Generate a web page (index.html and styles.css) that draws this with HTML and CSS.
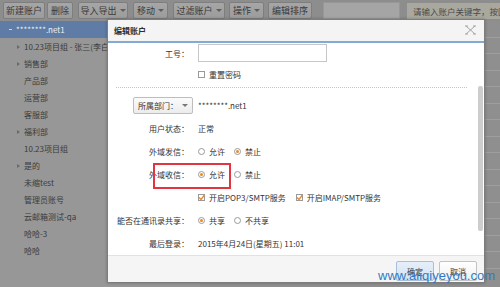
FILE: index.html
```html
<!DOCTYPE html>
<html lang="zh-CN">
<head>
<meta charset="utf-8">
<link rel="stylesheet" href="styles.css">
</head>
<body>
<div class="page">
  <div class="toolbar">
    <span class="tbtn w42">新建账户</span>
    <span class="tbtn w26 ml2">删除</span>
    <span class="tbtn w50">导入导出 <i class="caret"></i></span>
    <span class="tbtn w35">移动 <i class="caret"></i></span>
    <span class="tbtn w52">过滤账户 <i class="caret"></i></span>
    <span class="tbtn w35 ml4">操作 <i class="caret"></i></span>
    <span class="tbtn w44 ml4">编辑排序</span>
    <span class="search"></span>
    <span class="hint">请输入账户关键字，按回车</span>
  </div>
  <div class="content">
    <div class="sidebar">
      <div class="node selected"><i class="dash"></i>********.net1</div>
      <div class="node"><i class="arrow"></i>10.23项目组 - 张三(李白)</div>
      <div class="node"><i class="arrow"></i>销售部</div>
      <div class="node"><i class="noarrow"></i>产品部</div>
      <div class="node"><i class="noarrow"></i>运营部</div>
      <div class="node"><i class="noarrow"></i>客服部</div>
      <div class="node"><i class="arrow"></i>福利部</div>
      <div class="node"><i class="noarrow"></i>10.23项目组</div>
      <div class="node"><i class="arrow"></i>是的</div>
      <div class="node"><i class="noarrow"></i>未缩test</div>
      <div class="node"><i class="noarrow"></i>管理员账号</div>
      <div class="node"><i class="noarrow"></i>云邮箱测试-qa</div>
      <div class="node"><i class="noarrow"></i>哈哈-3</div>
      <div class="node"><i class="noarrow"></i>哈哈</div>
    </div>
    <div class="main">
      <div class="trow"></div><div class="trow"></div><div class="trow"></div><div class="trow"></div>
      <div class="trow"></div><div class="trow"></div><div class="trow"></div><div class="trow"></div>
      <div class="trow"></div><div class="trow"></div><div class="trow"></div><div class="trow"></div>
      <div class="trow"></div><div class="trow"></div><div class="trow"></div>
      <div class="trow last"><span class="cb"></span><span class="mlink">********</span><span class="mtext">********.net1 ****</span></div>
    </div>
  </div>
</div>

<div class="dialog">
  <div class="dhead">
    <span class="dtitle">编辑账户</span>
    <svg class="close" width="11" height="10" viewBox="0 0 11 10"><path d="M1 1 L10 9 M10 1 L1 9 M0 1 H3 M8 1 H11 M0 9 H3 M8 9 H11" stroke="#a4a4a4" stroke-width="1" fill="none"/></svg>
  </div>
  <div class="dbody">
    <div class="frow r18">
      <label class="lbl">工号：</label>
      <span class="input"></span>
    </div>
    <div class="frow r24">
      <span class="lbl"></span>
      <span class="opt"><i class="chk"></i>重置密码</span>
    </div>
    <div class="sep"></div>
    <div class="frow r19">
      <span class="lbl"><span class="deptbtn">所属部门：<i class="caret dark"></i></span></span>
      <span>********.net1</span>
    </div>
    <div class="frow r23 mt2">
      <span class="lbl">用户状态：</span>
      <span>正常</span>
    </div>
    <div class="frow r23">
      <span class="lbl">外域发信：</span>
      <span class="opt"><i class="radio"></i>允许</span>
      <span class="opt"><i class="radio on"></i>禁止</span>
    </div>
    <div class="frow r23 marked">
      <span class="lbl">外域收信：</span>
      <span class="opt"><i class="radio on"></i>允许</span>
      <span class="opt"><i class="radio"></i>禁止</span>
      <span class="redbox"></span>
    </div>
    <div class="frow r23">
      <span class="lbl"></span>
      <span class="opt wide"><i class="chk on"><svg width="7" height="7" viewBox="0 0 7 7"><path d="M1 3.5 L3 5.5 L6.5 1" stroke="#e5882f" stroke-width="1.4" fill="none"/></svg></i>开启POP3/SMTP服务</span>
      <span class="opt"><i class="chk on"><svg width="7" height="7" viewBox="0 0 7 7"><path d="M1 3.5 L3 5.5 L6.5 1" stroke="#e5882f" stroke-width="1.4" fill="none"/></svg></i>开启IMAP/SMTP服务</span>
    </div>
    <div class="frow r23">
      <span class="lbl">能否在通讯录共享：</span>
      <span class="opt"><i class="radio on"></i>共享</span>
      <span class="opt"><i class="radio"></i>不共享</span>
    </div>
    <div class="frow r23">
      <span class="lbl">最后登录：</span>
      <span>2015年4月24日(星期五) 11:01</span>
    </div>
    <div class="thumb"></div>
  </div>
  <div class="dfoot">
    <span class="btn primary">确定</span>
    <span class="btn">取消</span>
  </div>
</div>

<div class="watermark">www.aliqiyeyou.com</div>
</body>
</html>
```

FILE: styles.css
```css
* { box-sizing: border-box; }
html, body { margin: 0; padding: 0; }
body {
  width: 500px;
  height: 287px;
  overflow: hidden;
  position: relative;
  background: #8e8e8e;
  font-family: "Noto Sans CJK SC", "Liberation Sans", sans-serif;
  font-size: 8px;
  color: #333;
}
.page { display: flex; flex-direction: column; height: 287px; }

.toolbar {
  height: 21px;
  display: flex;
  align-items: center;
  gap: 5px;
  padding: 0 0 0 3px;
  background: #8d8d8d;
  flex: none;
}
.tbtn {
  height: 17px;
  display: flex;
  align-items: center;
  justify-content: center;
  gap: 3px;
  background: linear-gradient(#a6a6a6, #9c9c9c);
  border: 1px solid #7e7e7e;
  border-radius: 2px;
  font-size: 9px;
  color: #3a3a3a;
  white-space: nowrap;
  flex: none;
}
.w42 { width: 42px; }
.w26 { width: 26px; }
.w50 { width: 50px; }
.w35 { width: 35px; }
.w52 { width: 52px; }
.w44 { width: 44px; }
.ml2 { margin-left: -3px; }
.ml4 { margin-left: -1px; }
.caret {
  display: inline-block;
  width: 0; height: 0;
  border-left: 3px solid transparent;
  border-right: 3px solid transparent;
  border-top: 3px solid #5e5e5e;
}
.caret.dark { border-top-color: #777; margin-left: 4px; }
.search {
  width: 77px;
  height: 17px;
  margin-left: 6px;
  background: #a5a5a5;
  border: 1px solid #979797;
  flex: none;
}
.hint {
  position: relative;
  margin-left: 2px;
  height: 16px;
  flex: 1;
  display: flex;
  align-items: center;
  padding-left: 6px;
  background: #a9a89f;
  color: #4a4a4a;
  font-size: 8.5px;
  white-space: nowrap;
  overflow: hidden;
}
.hint::before {
  content: "";
  position: absolute;
  left: -4px;
  top: 4px;
  border-top: 4px solid transparent;
  border-bottom: 4px solid transparent;
  border-right: 4px solid #a9a89f;
}

.content { flex: 1; display: flex; min-height: 0; }
.sidebar {
  width: 200px;
  flex: none;
  background: #979797;
  padding-top: 0;
}
.node {
  height: 17px;
  display: flex;
  align-items: center;
  padding-left: 17px;
  color: #3b3b3b;
  white-space: nowrap;
}
.node .arrow {
  width: 0; height: 0;
  border-top: 2.5px solid transparent;
  border-bottom: 2.5px solid transparent;
  border-left: 3px solid #6a6a6a;
  margin-right: 4px;
}
.node .noarrow { width: 3px; margin-right: 4px; }
.node.selected {
  background: #5f7ca6;
  color: #f0f0f0;
  padding-left: 9px;
}
.node .dash {
  width: 3px; height: 1px;
  background: #c9d4e4;
  margin-right: 4px;
}
.main { flex: 1; background: #8f8f8f; }
.trow {
  height: 16.5px;
  border-bottom: 1px solid #9e9e9e;
  display: flex;
  align-items: center;
  gap: 10px;
  padding-left: 4px;
}
.trow.last { border-bottom: 0; }
.cb { width: 7px; height: 7px; border: 1px solid #777; margin-left: 0; }
.mlink { color: #3c4f7c; text-decoration: underline; }
.mtext { color: #555; }

.dialog {
  position: absolute;
  left: 107px;
  top: 19px;
  width: 378px;
  height: 264px;
  background: #fff;
  border: 1px solid #7d7d7d;
  display: flex;
  flex-direction: column;
  box-shadow: 0 0 3px rgba(0,0,0,0.25);
}
.dhead {
  height: 23px;
  flex: none;
  background: #f4f4f4;
  border-bottom: 2px solid #83aad6;
  display: flex;
  align-items: center;
  justify-content: space-between;
  padding: 0 8px 0 6px;
}
.dtitle { font-weight: bold; color: #2f2f2f; font-size: 8px; }
.close { display: block; margin-top: -2px; }

.dbody {
  position: relative;
  flex: 1;
  padding-top: 1px;
}
.frow {
  display: flex;
  align-items: center;
  white-space: nowrap;
  position: relative;
}
.r18 { height: 18px; }
.r19 { height: 19px; }
.r23 { height: 23px; }
.r24 { height: 24px; }
.mt2 { margin-top: 2px; }
.lbl {
  width: 81px;
  flex: none;
  text-align: right;
  margin-right: 9px;
  display: flex;
  justify-content: flex-end;
  align-items: center;
  color: #333;
}
.input {
  width: 129px;
  height: 18px;
  border: 1px solid #c6c6c6;
  background: #fff;
}
.sep {
  margin: 1px 17px 8px 8px;
  border-top: 1px dotted #c4c4c4;
}
.deptbtn {
  width: 60px;
  height: 17px;
  margin-right: -4px;
  margin-left: auto;
  border: 1px solid #bdbdbd;
  border-radius: 2px;
  background: linear-gradient(#fbfbfb, #ececec);
  display: flex;
  align-items: center;
  justify-content: center;
  color: #333;
}
.opt {
  display: inline-flex;
  align-items: center;
  margin-right: 9px;
  color: #333;
}
.opt.wide { margin-right: 10px; }
.radio {
  width: 7px;
  height: 7px;
  border-radius: 50%;
  border: 1px solid #9a9a9a;
  background: #fff;
  margin-right: 4px;
  display: inline-flex;
  align-items: center;
  justify-content: center;
}
.radio.on::after {
  content: "";
  width: 3px;
  height: 3px;
  border-radius: 50%;
  background: #e78a2c;
}
.chk {
  width: 7px;
  height: 7px;
  border: 1px solid #9a9a9a;
  background: #fff;
  margin-right: 4px;
  display: inline-flex;
  align-items: center;
  justify-content: center;
  overflow: visible;
}
.chk svg { flex: none; margin-top: -1px; }
.redbox {
  position: absolute;
  left: 45px;
  top: 0;
  width: 78px;
  height: 26px;
  border: 2px solid #e2353f;
}
.thumb {
  position: absolute;
  right: 1px;
  top: 43px;
  width: 5px;
  height: 145px;
  background: #cdcdcd;
  border-radius: 2px;
}

.dfoot {
  height: 27px;
  flex: none;
  background: #f5f5f5;
  border-top: 1px solid #e2e2e2;
  display: flex;
  justify-content: flex-end;
  align-items: flex-start;
  gap: 5px;
  padding: 5px 7px 0 0;
}
.btn {
  width: 38px;
  height: 20px;
  display: flex;
  align-items: center;
  justify-content: center;
  border: 1px solid #c3c3c3;
  border-radius: 2px;
  background: linear-gradient(#ffffff, #f0f0f0);
  color: #333;
}
.btn.primary {
  background: linear-gradient(#e6eff9, #d3e2f3);
  border-color: #a8bfd9;
}

.watermark {
  position: absolute;
  left: 378px;
  top: 268px;
  font-family: "Liberation Sans", Arial, sans-serif;
  font-size: 13px;
  line-height: 16px;
  color: #2f7bc6;
  white-space: nowrap;
}
```
